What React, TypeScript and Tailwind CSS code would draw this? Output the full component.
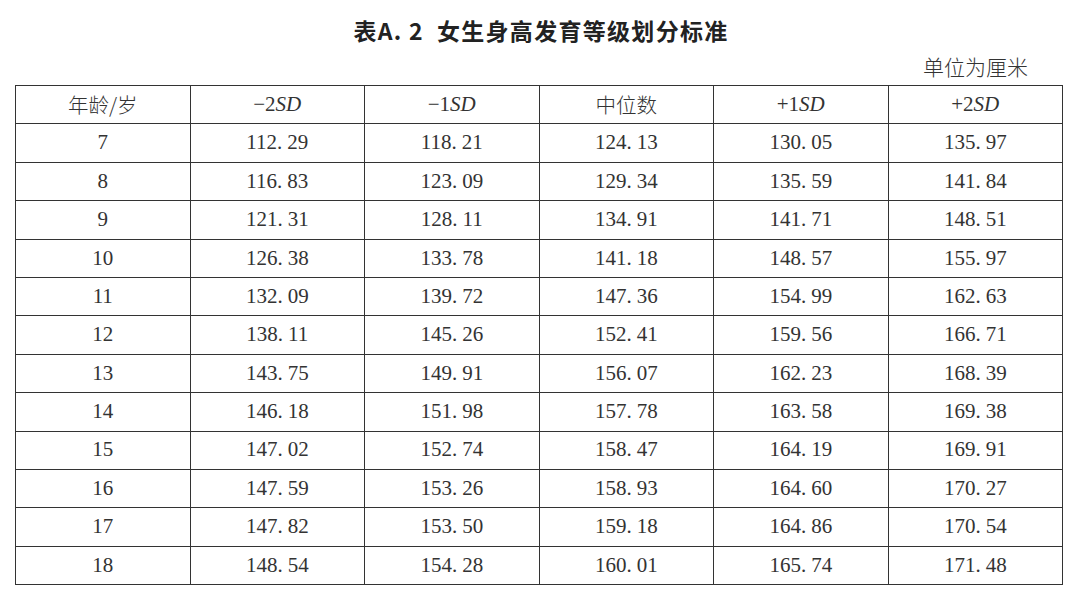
const headers = ["年龄/岁", "−2", "−1", "中位数", "+1", "+2"]

const rows: string[][] = [
  ["7", "112.29", "118.21", "124.13", "130.05", "135.97"],
  ["8", "116.83", "123.09", "129.34", "135.59", "141.84"],
  ["9", "121.31", "128.11", "134.91", "141.71", "148.51"],
  ["10", "126.38", "133.78", "141.18", "148.57", "155.97"],
  ["11", "132.09", "139.72", "147.36", "154.99", "162.63"],
  ["12", "138.11", "145.26", "152.41", "159.56", "166.71"],
  ["13", "143.75", "149.91", "156.07", "162.23", "168.39"],
  ["14", "146.18", "151.98", "157.78", "163.58", "169.38"],
  ["15", "147.02", "152.74", "158.47", "164.19", "169.91"],
  ["16", "147.59", "153.26", "158.93", "164.60", "170.27"],
  ["17", "147.82", "153.50", "159.18", "164.86", "170.54"],
  ["18", "148.54", "154.28", "160.01", "165.74", "171.48"],
]

function Num({ value }: { value: string }) {
  const [a, b] = value.split(".")
  if (b === undefined) return <span>{value}</span>
  return (
    <span>
      {a}
      <span className="mr-[5px]">.</span>
      {b}
    </span>
  )
}

function HeaderCell({ label, i }: { label: string; i: number }) {
  if (i === 0 || i === 3) {
    return <span className="font-['Noto_Sans_CJK_SC',sans-serif] text-[20.5px] font-light text-[#333]">{label}</span>
  }
  return (
    <span className="font-['Liberation_Serif',serif] text-[21px] text-[#333]">
      {label}
      <span className="italic">SD</span>
    </span>
  )
}

export default function App() {
  return (
    <div className="w-[1080px] h-[592px] bg-white overflow-hidden">
      <div className="pt-[15px] flex justify-center">
        <h1 className="font-['Noto_Sans_CJK_SC',sans-serif] font-semibold text-[23px] leading-[30px] text-[#222] tracking-[1.3px] pl-[2px]">
          表A. 2&nbsp; 女生身高发育等级划分标准
        </h1>
      </div>
      <div className="flex justify-end pr-[52px] mt-[6px]">
        <span className="font-['Noto_Sans_CJK_SC',sans-serif] font-light text-[21px] leading-[30px] text-[#333]">
          单位为厘米
        </span>
      </div>
      <div className="ml-[15px] mt-[4px] w-[1048px] grid grid-cols-6 border-l-[1.5px] border-t-[1.5px] border-[#333]">
        {headers.map((h, i) => (
          <div
            key={h + i}
            className="h-[38.4px] flex items-center justify-center border-r-[1.5px] border-b-[1.5px] border-[#333]"
          >
            <HeaderCell label={h} i={i} />
          </div>
        ))}
        {rows.map((r) =>
          r.map((v, i) => (
            <div
              key={r[0] + "-" + i}
              className="h-[38.4px] flex items-center justify-center border-r-[1.5px] border-b-[1.5px] border-[#333] font-['Liberation_Serif',serif] text-[21px] text-[#333]"
            >
              <Num value={v} />
            </div>
          ))
        )}
      </div>
    </div>
  )
}
